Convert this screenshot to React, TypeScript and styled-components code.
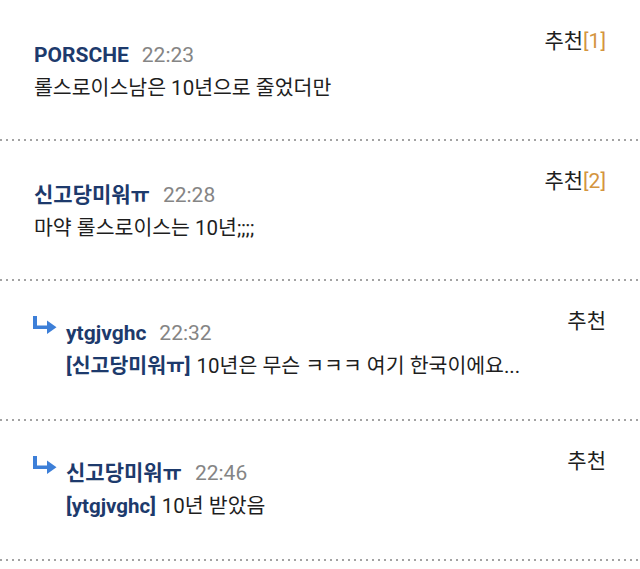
import React from 'react'
import styled, { createGlobalStyle } from 'styled-components'

const GlobalStyle = createGlobalStyle`
  html, body {
    margin: 0;
    padding: 0;
    background: #fff;
  }
  body {
    font-family: Roboto, "Noto Sans CJK KR", sans-serif;
    color: #222;
  }
`

const List = styled.div`
  width: 640px;
  padding-top: 1px;
`

// dotted separator drawn as a repeating 2px dot every 6px
const Item = styled.div`
  display: flex;
  justify-content: space-between;
  height: 140px;
  box-sizing: border-box;
  padding: 26px 34px 0 34px;
  background-image: linear-gradient(to right, #a3a3a3 2px, transparent 2px);
  background-size: 6px 2px;
  background-repeat: repeat-x;
  background-position: left bottom;
`

const Main = styled.div<{ $reply: boolean }>`
  display: flex;
  align-items: flex-start;
  margin-top: ${({ $reply }) => ($reply ? '12px' : '14px')};
`

const ReplyArrow = styled.svg`
  flex: none;
  width: 24px;
  height: 20px;
  margin: -4px 9px 0 -1px;
`

const Body = styled.div`
  display: flex;
  flex-direction: column;
`

const Header = styled.div`
  display: flex;
  align-items: baseline;
  font-size: 21px;
  line-height: 28px;
`

const Name = styled.span`
  font-weight: 700;
  color: #1d3a6c;
`

const Time = styled.span`
  margin-left: 13px;
  color: #858585;
`

const Content = styled.div`
  margin-top: 5px;
  font-size: 20.5px;
  line-height: 28px;
  color: #1e1e1e;
`

const Tag = styled.span`
  font-weight: 700;
  color: #1d3a6c;
  margin-right: 6px;
`

const Recommend = styled.div`
  font-size: 21px;
  line-height: 28px;
  color: #1e1e1e;
  white-space: nowrap;
`

const Count = styled.span`
  color: #d4953f;
`

interface CommentData {
  name: string
  time: string
  text: string
  replyTo?: string
  likes?: number
}

const COMMENTS: CommentData[] = [
  { name: 'PORSCHE', time: '22:23', text: '롤스로이스남은 10년으로 줄었더만', likes: 1 },
  { name: '신고당미워ㅠ', time: '22:28', text: '마약 롤스로이스는 10년;;;;', likes: 2 },
  { name: 'ytgjvghc', time: '22:32', text: '10년은 무슨 ㅋㅋㅋ 여기 한국이에요...', replyTo: '신고당미워ㅠ' },
  { name: '신고당미워ㅠ', time: '22:46', text: '10년 받았음', replyTo: 'ytgjvghc' },
]

function Arrow() {
  return (
    <ReplyArrow viewBox="0 0 24 20" aria-hidden>
      <rect x="0" y="1" width="4" height="13" fill="#3d7fd8" />
      <rect x="0" y="10.5" width="16" height="3.5" fill="#3d7fd8" />
      <polygon points="14,5.5 23.5,12.2 14,19" fill="#3d7fd8" />
    </ReplyArrow>
  )
}

export default function App() {
  return (
    <>
      <GlobalStyle />
      <List>
        {COMMENTS.map((c, i) => {
          const reply = !!c.replyTo
          return (
            <Item key={i}>
              <Main $reply={reply}>
                {reply && <Arrow />}
                <Body>
                  <Header>
                    <Name>{c.name}</Name>
                    <Time>{c.time}</Time>
                  </Header>
                  <Content>
                    {reply && <Tag>[{c.replyTo}]</Tag>}
                    {c.text}
                  </Content>
                </Body>
              </Main>
              <Recommend>
                추천{c.likes ? <Count>[{c.likes}]</Count> : null}
              </Recommend>
            </Item>
          )
        })}
      </List>
    </>
  )
}
